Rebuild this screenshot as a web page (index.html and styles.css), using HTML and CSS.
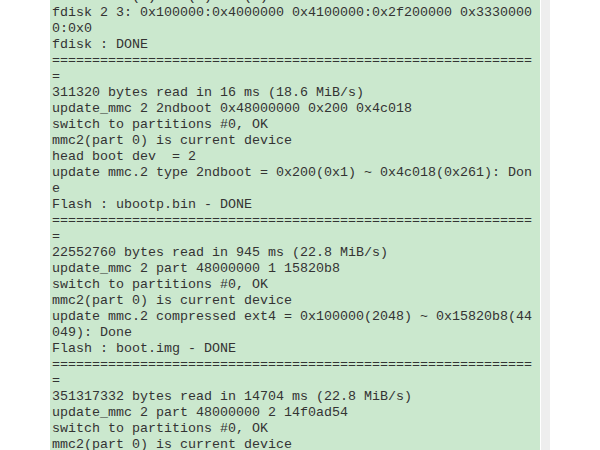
FILE: index.html
```html
<!DOCTYPE html>
<html>
<head>
<meta charset="utf-8">
<link rel="stylesheet" href="styles.css">
</head>
<body>
<div class="page">
  <div class="gutter"></div>
  <pre class="log">Make mmc 2(0) mbr(0) tab(0)
fdisk 2 3: 0x100000:0x4000000 0x4100000:0x2f200000 0x33300000:0x0
fdisk : DONE
=============================================================
311320 bytes read in 16 ms (18.6 MiB/s)
update_mmc 2 2ndboot 0x48000000 0x200 0x4c018
switch to partitions #0, OK
mmc2(part 0) is current device
head boot dev  = 2
update mmc.2 type 2ndboot = 0x200(0x1) ~ 0x4c018(0x261): Done
Flash : ubootp.bin - DONE
=============================================================
22552760 bytes read in 945 ms (22.8 MiB/s)
update_mmc 2 part 48000000 1 15820b8
switch to partitions #0, OK
mmc2(part 0) is current device
update mmc.2 compressed ext4 = 0x100000(2048) ~ 0x15820b8(44049): Done
Flash : boot.img - DONE
=============================================================
351317332 bytes read in 14704 ms (22.8 MiB/s)
update_mmc 2 part 48000000 2 14f0ad54
switch to partitions #0, OK
mmc2(part 0) is current device</pre>
  <div class="rail"></div>
</div>
</body>
</html>
```
FILE: styles.css
```css
html, body {
  margin: 0;
  padding: 0;
  background: #ffffff;
  height: 100%;
  overflow: hidden;
}
.page {
  display: flex;
  align-items: stretch;
  height: 450px;
  overflow: hidden;
}
.gutter {
  flex: 0 0 50px;
}
.log {
  flex: 0 0 486px;
  margin: -11px 0 0 0;
  padding: 0 2px 0 2px;
  background: #cbe8ce;
  color: #333333;
  font-family: "Liberation Mono", "Courier New", monospace;
  font-size: 13.333px;
  line-height: 16px;
  white-space: pre-wrap;
  word-break: break-all;
  overflow: hidden;
}
.rail {
  flex: 0 0 9px;
  margin-left: 1px;
  background: #eeeeee;
}
```
